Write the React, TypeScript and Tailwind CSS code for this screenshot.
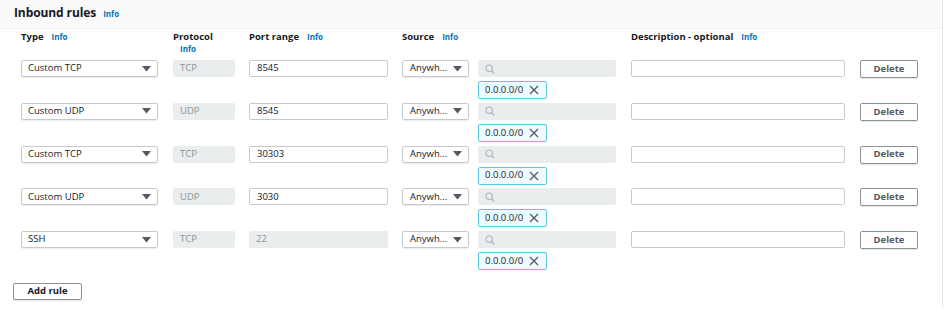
import React from "react";

const rows = [
  { type: "Custom TCP", proto: "TCP", port: "8545", portDisabled: false },
  { type: "Custom UDP", proto: "UDP", port: "8545", portDisabled: false },
  { type: "Custom TCP", proto: "TCP", port: "30303", portDisabled: false },
  { type: "Custom UDP", proto: "UDP", port: "3030", portDisabled: false },
  { type: "SSH", proto: "TCP", port: "22", portDisabled: true },
];

function Caret() {
  return (
    <svg width="9" height="6" viewBox="0 0 9 6" className="shrink-0">
      <path d="M0 0 L9 0 L4.5 5.5 Z" fill="#545b64" />
    </svg>
  );
}

function Info({ className = "" }: { className?: string }) {
  return <span className={"text-[8px] font-bold text-[#0073bb] " + className}>Info</span>;
}

export default function App() {
  return (
    <div
      className="w-[945px] h-[314px] bg-white text-[#16191f] relative"
      style={{ fontFamily: '"Open Sans", "DejaVu Sans", sans-serif' }}
    >
      <div className="w-[943px] h-[308px] border-r border-[#e3e7e7]">
        <div className="h-[29px] bg-[#fafafa] border-b border-[#eef0f0] flex items-center pl-[14px] pb-[2px]">
          <span className="text-[12px] font-bold tracking-[-0.1px]">Inbound rules</span>
          <Info className="ml-[7px] mt-[2px]" />
        </div>
        <div className="flex pl-[21px] pt-[1px] h-[31px] text-[9.5px] font-bold">
          <div className="w-[152px] flex items-start">
            <span>Type</span>
            <Info className="ml-[8px] mt-[1px]" />
          </div>
          <div className="w-[76px] flex flex-col">
            <span>Protocol</span>
            <Info className="ml-[7px] -mt-[1px]" />
          </div>
          <div className="w-[153px] flex items-start">
            <span>Port range</span>
            <Info className="ml-[8px] mt-[1px]" />
          </div>
          <div className="w-[229px] flex items-start">
            <span>Source</span>
            <Info className="ml-[8px] mt-[1px]" />
          </div>
          <div className="flex items-start">
            <span>Description - optional</span>
            <Info className="ml-[8px] mt-[1px]" />
          </div>
        </div>
        <div className="flex flex-col">
          {rows.map((r, i) => (
            <div key={i} className="h-[42.75px] flex pl-[21px] text-[9.5px]">
              <div className="w-[137px] h-[17px] border border-[#c3cccc] rounded-[2px] flex items-center justify-between pl-[6px] pr-[6px] shadow-[0_1px_1px_rgba(0,0,0,0.08)]">
                <span>{r.type}</span>
                <Caret />
              </div>
              <div className="ml-[15px] w-[62px] h-[17px] bg-[#eaeded] rounded-[2px] flex items-center pl-[7px] text-[#879596]">
                {r.proto}
              </div>
              <div
                className={
                  "ml-[14px] w-[139px] h-[17px] rounded-[2px] flex items-center pl-[7px] " +
                  (r.portDisabled
                    ? "bg-[#eaeded] text-[#879596]"
                    : "border border-[#c3cccc] bg-white")
                }
              >
                {r.port}
              </div>
              <div className="ml-[14px] w-[67px] h-[17px] border border-[#c3cccc] rounded-[2px] flex items-center justify-between pl-[7px] pr-[6px] shadow-[0_1px_1px_rgba(0,0,0,0.08)]">
                <span>Anywh...</span>
                <Caret />
              </div>
              <div className="ml-[9px] w-[138px] flex flex-col">
                <div className="h-[17px] bg-[#eaeded] rounded-[2px] flex items-center pl-[7px]">
                  <svg width="10" height="10" viewBox="0 0 10 10">
                    <circle cx="4.2" cy="4.2" r="3.2" fill="none" stroke="#aab7b8" strokeWidth="1.1" />
                    <path d="M6.5 6.5 L9.3 9.3" stroke="#aab7b8" strokeWidth="1.2" />
                  </svg>
                </div>
                <div className="mt-[4px] w-[69px] h-[18px] border border-[#5ec8e3] bg-[#f1faff] rounded-[2px] flex items-center pl-[6px] gap-[6px]">
                  <span className="text-[9.5px]">0.0.0.0/0</span>
                  <svg width="10" height="10" viewBox="0 0 10 10">
                    <path d="M1 1 L9 9 M9 1 L1 9" stroke="#545b64" strokeWidth="1.3" />
                  </svg>
                </div>
              </div>
              <div className="ml-[15px] w-[214px] h-[17px] border border-[#c3cccc] rounded-[2px] bg-white" />
              <div className="ml-[15px] w-[58px] h-[18px] border border-[#879596] rounded-[2px] flex items-center justify-center text-[9.5px] font-bold text-[#545b64] shadow-[0_1px_1px_rgba(0,0,0,0.12)]">
                Delete
              </div>
            </div>
          ))}
        </div>
        <div className="pl-[13px] pt-[9px]">
          <div className="w-[69px] h-[17px] border border-[#879596] rounded-[2px] flex items-center justify-center text-[9.5px] font-bold text-[#16191f] shadow-[0_1px_1px_rgba(0,0,0,0.12)]">
            Add rule
          </div>
        </div>
      </div>
    </div>
  );
}
